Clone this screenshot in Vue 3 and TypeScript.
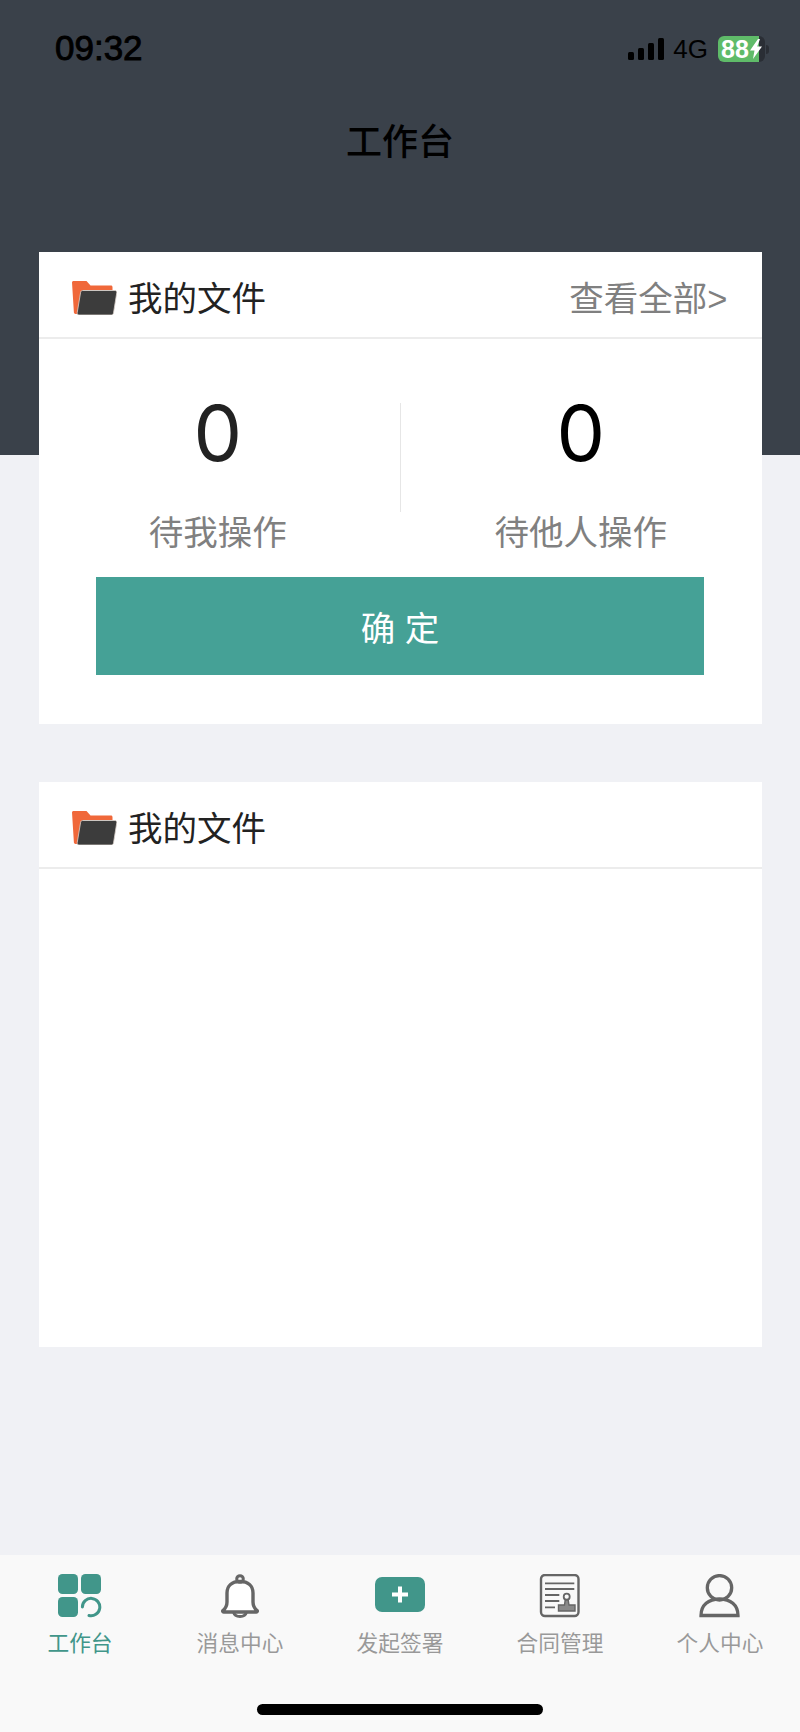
<template>
  <div class="page">
    <header class="top">
      <div class="status">
        <span class="time">09:32</span>
        <div class="status-right">
          <svg class="signal" width="36" height="22" viewBox="0 0 36 22">
            <rect x="0" y="14" width="6" height="8" rx="1.5" />
            <rect x="10" y="10" width="6" height="12" rx="1.5" />
            <rect x="20" y="5" width="6" height="17" rx="1.5" />
            <rect x="30" y="0" width="6" height="22" rx="1.5" />
          </svg>
          <span class="net">4G</span>
          <div class="battery">
            <div class="battery-fill">88</div>
            <div class="battery-rest"></div>
            <div class="battery-nub"></div>
            <svg class="bolt" width="12" height="20" viewBox="0 0 12 20">
              <path d="M8 0 0 11.500h4.500L3 20l9-12.500H7.200L10 0z" fill="#fff" />
            </svg>
          </div>
        </div>
      </div>
      <h1 class="title">工作台</h1>
    </header>

    <main class="content">
      <section class="card first">
        <div class="card-head">
          <div class="card-title">
            <svg class="folder" width="45" height="34" viewBox="0 0 45 34">
              <path d="M0 1.500C0 .7.7 0 1.500 0h13l4 4.500H39c.8 0 1.500.7 1.500 1.500v3H11L6 33H3.500C2.700 33 2 32.400 1.900 31.600z" fill="#f0683a" />
              <path d="M10.500 9.500H43c1.200 0 2 1 1.800 2.100l-3.300 20.300c-.2 1.200-1.100 2.100-2.300 2.100H7c-1.200 0-2-1-1.800-2.200l3.400-20.400c.2-1.100.9-1.900 1.900-1.900z" fill="#3c3c3c" stroke="#d9d0ca" stroke-width=".8" />
            </svg>
            <span>我的文件</span>
          </div>
          <a class="view-all">查看全部&gt;</a>
        </div>
        <div class="stats">
          <div class="stat">
            <div class="num dark">0</div>
            <div class="label">待我操作</div>
          </div>
          <div class="stat">
            <div class="num">0</div>
            <div class="label">待他人操作</div>
          </div>
          <div class="divider"></div>
        </div>
        <button class="confirm" type="button">确 定</button>
      </section>

      <section class="card second">
        <div class="card-head">
          <div class="card-title">
            <svg class="folder" width="45" height="34" viewBox="0 0 45 34">
              <path d="M0 1.500C0 .7.7 0 1.500 0h13l4 4.500H39c.8 0 1.500.7 1.500 1.500v3H11L6 33H3.500C2.700 33 2 32.400 1.900 31.600z" fill="#f0683a" />
              <path d="M10.500 9.500H43c1.200 0 2 1 1.800 2.100l-3.300 20.300c-.2 1.200-1.100 2.100-2.300 2.100H7c-1.200 0-2-1-1.800-2.200l3.400-20.400c.2-1.100.9-1.900 1.900-1.900z" fill="#3c3c3c" stroke="#d9d0ca" stroke-width=".8" />
            </svg>
            <span>我的文件</span>
          </div>
        </div>
      </section>
    </main>

    <nav class="tabbar">
      <div class="tabs">
        <div class="tab active">
          <svg class="tab-icon" width="44" height="44" viewBox="0 0 44 44">
            <rect x="0" y="0" width="20" height="20" rx="4.500" fill="#41968a" />
            <rect x="23" y="0" width="20" height="20" rx="4.500" fill="#41968a" />
            <rect x="0" y="23" width="20" height="20" rx="4.500" fill="#41968a" />
            <path d="M24.400 33A8.700 8.700 0 1 1 31 41.500" fill="none" stroke="#41968a" stroke-width="3" stroke-linecap="round" />
          </svg>
          <span>工作台</span>
        </div>
        <div class="tab">
          <svg class="tab-icon" width="44" height="44" viewBox="0 0 44 44">
            <path d="M5 36.500c3-2.500 4-5 4-8.500V19c0-7.500 5-11.500 13-11.500S35 11.500 35 19v9c0 3.500 1 6 4 8.500.6.600.3 1.500-.6 1.500H5.600c-.9 0-1.200-.9-.6-1.500z" fill="#fff" stroke="#666" stroke-width="3.400" stroke-linejoin="round" />
            <circle cx="22" cy="5" r="3.300" fill="none" stroke="#666" stroke-width="3" />
            <path d="M15.500 38c.8 3.400 3.400 4.500 6.500 4.500s5.700-1.100 6.500-4.500" fill="none" stroke="#666" stroke-width="3" />
          </svg>
          <span>消息中心</span>
        </div>
        <div class="tab">
          <svg class="tab-icon" width="50" height="44" viewBox="0 0 50 44">
            <rect x="0" y="3" width="50" height="35" rx="7" fill="#41968a" />
            <path d="M25 12.500v16M17 20.500h16" stroke="#fff" stroke-width="4" />
          </svg>
          <span>发起签署</span>
        </div>
        <div class="tab">
          <svg class="tab-icon" width="44" height="44" viewBox="0 0 44 44">
            <rect x="3" y="1" width="37.500" height="41" rx="4" fill="none" stroke="#666" stroke-width="2.400" />
            <path d="M7 9.300h29.300M7 15h29.300M7 21h14.300M7 27h14.300M7 33.300h10" stroke="#666" stroke-width="1.800" />
            <circle cx="28.700" cy="22.700" r="3" fill="none" stroke="#666" stroke-width="1.800" />
            <path d="M27.200 26h3l.8 5h6v6h-16.500v-6h6z" fill="#8a8a8a" stroke="#666" stroke-width="1.400" />
          </svg>
          <span>合同管理</span>
        </div>
        <div class="tab">
          <svg class="tab-icon" width="44" height="44" viewBox="0 0 44 44">
            <circle cx="21.500" cy="13.800" r="12.200" fill="none" stroke="#666" stroke-width="3.300" />
            <path d="M3 41.500C3 31 10.500 25 21.500 25S40 31 40 41.500z" fill="none" stroke="#666" stroke-width="3.300" />
          </svg>
          <span>个人中心</span>
        </div>
      </div>
      <div class="home-bar"></div>
    </nav>
  </div>
</template>

<script setup lang="ts">
</script>

<style>
body {
  background: #f0f1f5;
}
</style>

<style scoped>
.page {
  width: 800px;
  height: 1732px;
  display: flex;
  flex-direction: column;
  background: #f0f1f5;
  font-family: "Liberation Sans", "Noto Sans CJK SC", sans-serif;
  overflow: hidden;
}

.top {
  height: 455px;
  flex-shrink: 0;
  background: #3a414a;
  color: #000;
  box-sizing: border-box;
  padding-top: 30px;
}

.status {
  height: 38px;
  display: flex;
  align-items: center;
  justify-content: space-between;
  padding: 0 31px 0 55px;
}

.time {
  font-size: 35px;
  margin-top: -2px;
  -webkit-text-stroke: 0.9px #000;
}

.status-right {
  display: flex;
  align-items: center;
}

.signal {
  fill: #000;
}

.net {
  font-size: 26px;
  margin: 0 10px 0 9px;
}

.battery {
  position: relative;
  display: flex;
  align-items: center;
  height: 26px;
}

.battery-fill {
  width: 41px;
  height: 26px;
  box-sizing: border-box;
  padding-left: 3px;
  background: #5fbb69;
  border-radius: 6px 0 0 6px;
  color: #fff;
  font-size: 25px;
  line-height: 26px;
  font-weight: 700;
}

.battery-rest {
  width: 6px;
  height: 26px;
  background: #2a2e35;
  border-radius: 0 6px 6px 0;
}

.battery-nub {
  width: 3px;
  height: 9px;
  margin-left: 1px;
  background: #2a2e35;
  border-radius: 0 3px 3px 0;
}

.bolt {
  position: absolute;
  left: 32px;
  top: 3px;
}

.title {
  margin: 50px 0 0;
  text-align: center;
  font-size: 36px;
  line-height: 50px;
  font-weight: 500;
}

.content {
  flex: 1;
  margin-top: -203px;
  padding: 0 38.500px;
  position: relative;
}

.card {
  background: #fff;
}

.first {
  height: 472px;
}

.second {
  height: 565px;
  margin-top: 58px;
}

.card-head {
  height: 87px;
  box-sizing: border-box;
  border-bottom: 2px solid #ececec;
  display: flex;
  align-items: center;
  justify-content: space-between;
  padding: 3px 34px 0 33.500px;
  font-size: 34.500px;
}

.card-title {
  display: flex;
  align-items: center;
  color: #222;
}

.folder {
  margin: 4px 11px 0 0;
}

.view-all {
  color: #808080;
}

.stats {
  position: relative;
  display: grid;
  grid-template-columns: 1fr 1fr;
  padding-top: 49px;
  text-align: center;
}

.stat:first-child {
  padding-right: 3px;
}

.num {
  font-family: Inter, "Liberation Sans", sans-serif;
  font-size: 77px;
  line-height: 90px;
  color: #000;
}

.num.dark {
  color: #222;
}

.label {
  margin-top: 31px;
  font-size: 34.500px;
  line-height: 48px;
  color: #808080;
}

.divider {
  position: absolute;
  left: 361px;
  top: 64px;
  width: 1px;
  height: 109px;
  background: #e6e6e6;
}

.confirm {
  display: block;
  width: 608px;
  height: 98px;
  margin: 20px auto 0;
  border: 0;
  background: #45a196;
  color: #fff;
  font-family: inherit;
  font-size: 34.500px;
}

.tabbar {
  height: 177px;
  flex-shrink: 0;
  background: #f9f9f9;
  position: relative;
}

.tabs {
  display: grid;
  grid-template-columns: repeat(5, 160px);
  padding-top: 19px;
}

.tab {
  display: flex;
  flex-direction: column;
  align-items: center;
  font-size: 21.700px;
  line-height: 30px;
  color: #999;
}

.tab.active {
  color: #41968a;
}

.tab-icon {
  margin-bottom: 11px;
}

.home-bar {
  position: absolute;
  left: 257px;
  bottom: 17px;
  width: 286px;
  height: 11px;
  border-radius: 6px;
  background: #000;
}
</style>
